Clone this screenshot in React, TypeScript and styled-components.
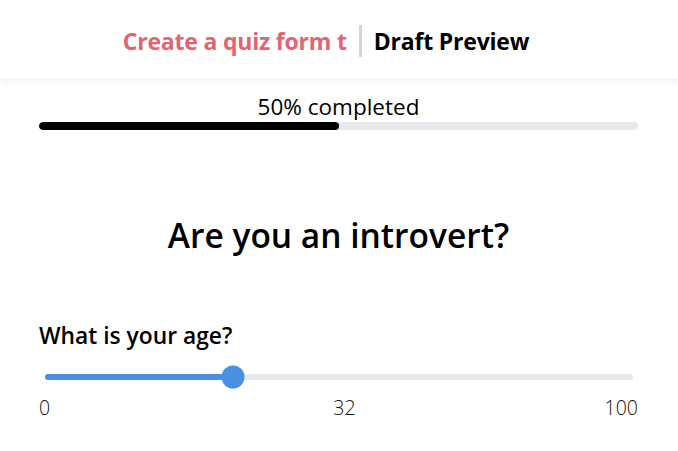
import React from "react";
import styled, { createGlobalStyle } from "styled-components";

const Global = createGlobalStyle`
  html, body { margin: 0; padding: 0; background: #ffffff; }
  body { font-family: "Segoe UI", "Open Sans", "Noto Sans", sans-serif; color: #000; }
`;

const Page = styled.div`
  width: 678px;
  min-height: 451px;
  display: flex;
  flex-direction: column;
`;

const Header = styled.header`
  height: 80px;
  display: flex;
  align-items: center;
  justify-content: center;
  gap: 12px;
  box-shadow: 0 2px 6px rgba(0, 0, 0, 0.06);
  border-bottom: 1px solid #f1f1f1;
  padding: 2px 26px 0 0;
  box-sizing: border-box;
`;

const HeaderTitle = styled.span<{ $accent?: boolean }>`
  font-size: 23px;
  font-weight: 700;
  color: ${(p) => (p.$accent ? "#e5636f" : "#000")};
  letter-spacing: -0.2px;
`;

const Divider = styled.div`
  width: 3px;
  height: 32px;
  background: #cfd5de;
`;

const Body = styled.main`
  padding: 12px 40px 0 39px;
  display: flex;
  flex-direction: column;
`;

const ProgressLabel = styled.div`
  text-align: center;
  font-size: 22.5px;
  font-weight: 400;
  line-height: 30px;
`;

const ProgressTrack = styled.div`
  height: 8px;
  border-radius: 4px;
  background: #e6e8eb;
  overflow: hidden;
`;

const ProgressFill = styled.div`
  height: 100%;
  border-radius: 4px;
  background: #000;
`;

const Question = styled.h1`
  margin: 83px 0 0;
  text-align: center;
  font-size: 33.5px;
  font-weight: 600;
  line-height: 44px;
`;

const FieldLabel = styled.div`
  margin-top: 64px;
  font-size: 22.8px;
  font-weight: 600;
  line-height: 30px;
`;

const SliderWrap = styled.div`
  position: relative;
  margin: 14px 5px 0 6px;
  height: 24px;
  display: flex;
  align-items: center;
`;

const SliderTrack = styled.div`
  flex: 1;
  height: 6px;
  border-radius: 3px;
  background: #e8e8e8;
  position: relative;
`;

const SliderFill = styled.div`
  position: absolute;
  left: 0;
  top: 0;
  bottom: 0;
  border-radius: 3px;
  background: #4a90e2;
`;

const Thumb = styled.div`
  position: absolute;
  top: 50%;
  width: 23px;
  height: 23px;
  border-radius: 50%;
  background: #4a90e2;
  transform: translate(-50%, -50%);
`;

const Scale = styled.div`
  margin-top: 5px;
  display: grid;
  grid-template-columns: 1fr auto 1fr;
  font-size: 19.5px;
  font-weight: 300;
  line-height: 28px;
  color: #111;
`;

const ScaleValue = styled.span<{ $align: "left" | "center" | "right" }>`
  text-align: ${(p) => p.$align};
  padding-left: ${(p) => (p.$align === "center" ? "12px" : "0")};
`;

export default function App() {
  const progress = 50;
  const value = 32;
  return (
    <>
      <Global />
      <Page>
        <Header>
          <HeaderTitle $accent>Create a quiz form t</HeaderTitle>
          <Divider />
          <HeaderTitle>Draft Preview</HeaderTitle>
        </Header>
        <Body>
          <ProgressLabel>{progress}% completed</ProgressLabel>
          <ProgressTrack>
            <ProgressFill style={{ width: `${progress}%` }} />
          </ProgressTrack>
          <Question>Are you an introvert?</Question>
          <FieldLabel>What is your age?</FieldLabel>
          <SliderWrap>
            <SliderTrack>
              <SliderFill style={{ width: `${value}%` }} />
              <Thumb style={{ left: `${value}%` }} />
            </SliderTrack>
          </SliderWrap>
          <Scale>
            <ScaleValue $align="left">0</ScaleValue>
            <ScaleValue $align="center">{value}</ScaleValue>
            <ScaleValue $align="right">100</ScaleValue>
          </Scale>
        </Body>
      </Page>
    </>
  );
}
